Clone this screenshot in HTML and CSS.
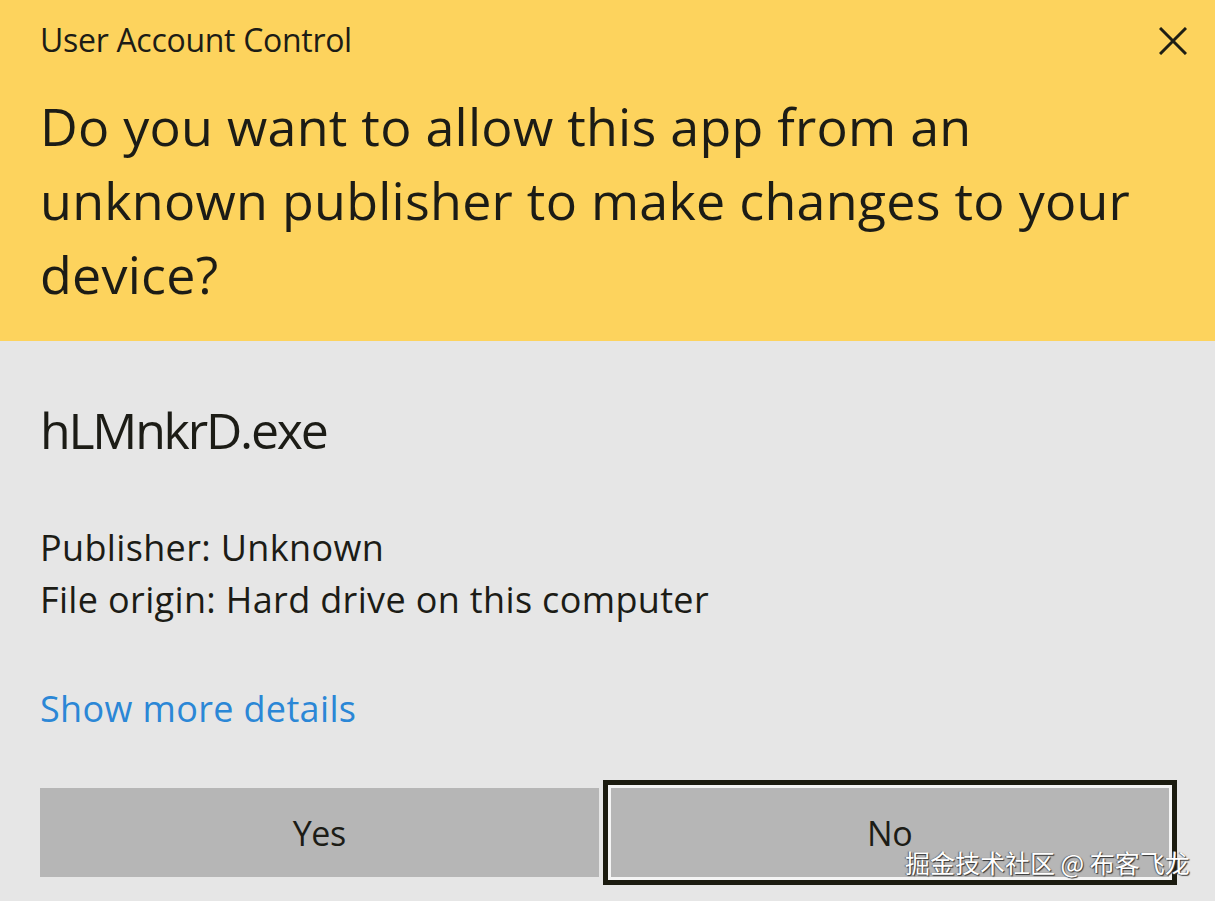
FILE: index.html
```html
<!DOCTYPE html>
<html>
<head>
<meta charset="utf-8">
<link rel="stylesheet" href="styles.css">
</head>
<body>
<div class="dialog">
  <div class="header">
    <div class="titlebar">
      <span class="title">User Account Control</span>
      <svg class="close" width="28" height="28" viewBox="0 0 28 28"><path d="M1 1 L27 27 M27 1 L1 27" stroke="#1e1e14" stroke-width="3" fill="none"/></svg>
    </div>
    <h1 class="question">Do you want to allow this app from an unknown publisher to make changes to your device?</h1>
  </div>
  <div class="content">
    <div class="filename">hLMnkrD.exe</div>
    <div class="details">
      <div class="line">Publisher: Unknown</div>
      <div class="line">File origin: Hard drive on this computer</div>
    </div>
    <div class="more">Show more details</div>
    <div class="buttons">
      <div class="btn">Yes</div>
      <div class="btn focused">No</div>
    </div>
  </div>
  <div class="watermark">掘金技术社区 @ 布客飞龙</div>
</div>
</body>
</html>
```
FILE: styles.css
```css
html, body {
  margin: 0;
  padding: 0;
}
body {
  background: #e6e6e6;
  font-family: "Open Sans", "Noto Sans", sans-serif;
  color: #1c1c16;
  width: 1215px;
  height: 901px;
  overflow: hidden;
}
.dialog {
  position: relative;
  height: 901px;
}
.header {
  background: #fdd35d;
  height: 341px;
  box-sizing: border-box;
  padding: 20px 28px 0 40px;
}
.titlebar {
  display: flex;
  justify-content: space-between;
  align-items: flex-start;
  height: 40px;
}
.title {
  font-size: 32px;
  line-height: 40px;
  letter-spacing: -0.3px;
}
.close {
  margin-top: 7px;
  margin-right: 0;
}
.question {
  margin: 29px 0 0 0;
  font-weight: normal;
  font-size: 52px;
  line-height: 74px;
  letter-spacing: 0.25px;
  width: 1140px;
}
.content {
  padding: 59px 46px 0 40px;
}
.filename {
  font-size: 50px;
  line-height: 60px;
  letter-spacing: -2.2px;
}
.details {
  margin-top: 62px;
}
.line {
  font-size: 36px;
  line-height: 52px;
  letter-spacing: 0.35px;
}
.more {
  margin-top: 57px;
  font-size: 36px;
  line-height: 52px;
  color: #2b87d6;
  letter-spacing: 0.35px;
}
.buttons {
  margin-top: 53px;
  display: flex;
  gap: 12px;
}
.btn {
  flex: 1;
  height: 89px;
  background: #b6b6b6;
  display: flex;
  align-items: center;
  justify-content: center;
  font-size: 34px;
  letter-spacing: -0.4px;
}
.btn.focused {
  box-shadow: 0 0 0 3px #f4f4f4, 0 0 0 8px #1c1c10;
}
.watermark {
  position: absolute;
  left: 905px;
  top: 844px;
  font-family: "Noto Sans CJK SC", sans-serif;
  font-size: 25px;
  line-height: 36px;
  color: #ffffff;
  text-shadow: 1px 1px 1px #333, -1px 0 1px #666;
}
```
